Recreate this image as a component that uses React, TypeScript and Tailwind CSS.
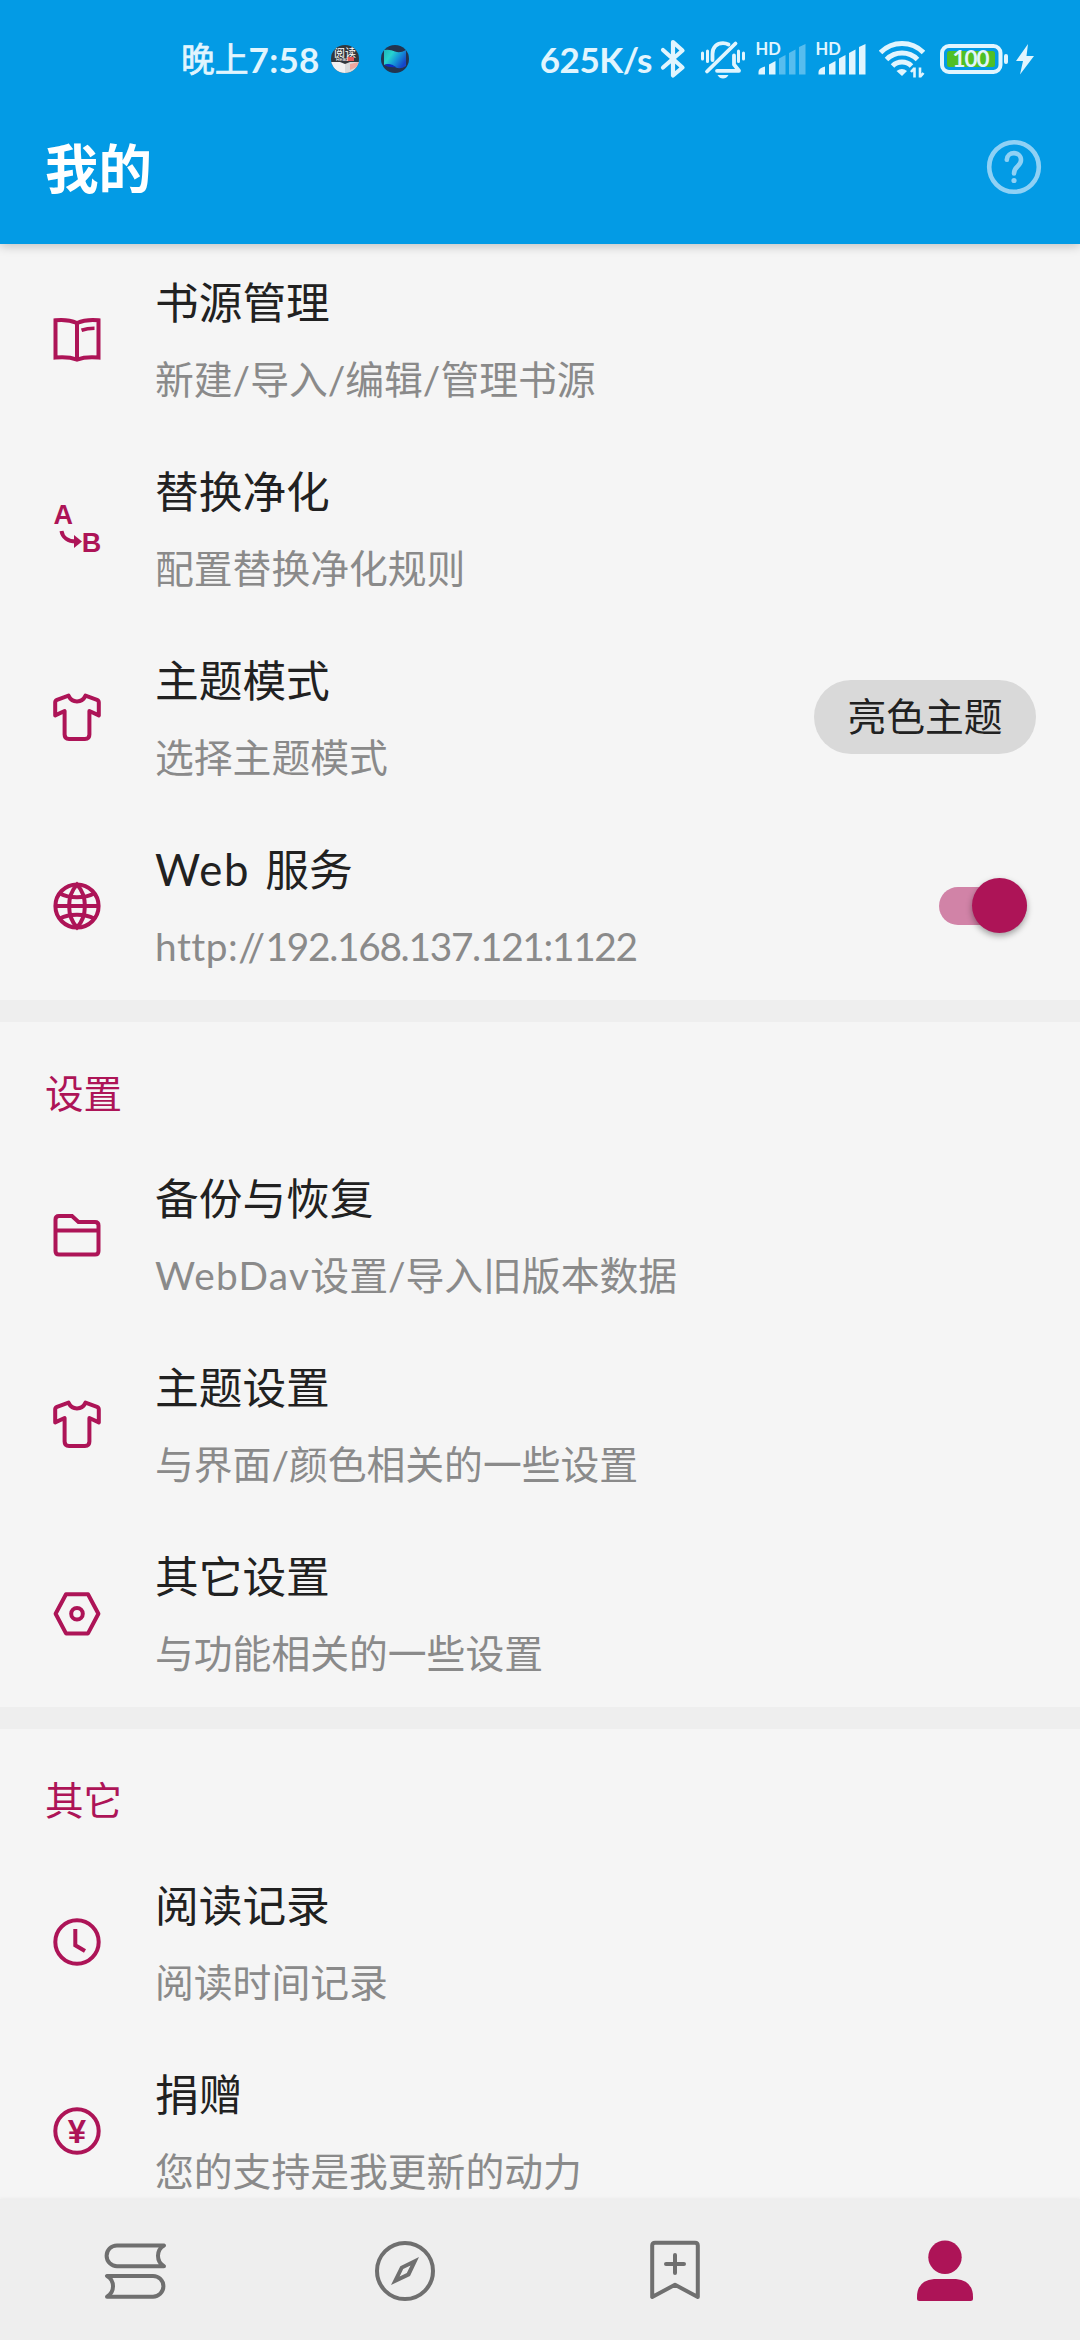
import React from 'react';

const IconBox = ({ children }: { children: React.ReactNode }) => (
  <svg
    width="50"
    height="50"
    viewBox="0 0 50 50"
    fill="none"
    stroke="#ad1457"
    strokeWidth="4"
    className="shrink-0 overflow-visible"
  >
    {children}
  </svg>
);

const BookIcon = () => (
  <IconBox>
    <path d="M3.5 6.3 C12 5.4 19 6.4 25 9 C31 6.4 38 5.4 46.5 6.3 V43.6 C38 42.8 31 43.4 25 45.6 C19 43.4 12 42.8 3.5 43.6 Z M25 9 V45" />
    <path d="M29.5 16.2 C33.5 14.8 38 14.2 42.5 14.2" strokeWidth="3.6" />
  </IconBox>
);

const ReplaceIcon = () => (
  <IconBox>
    <g fill="#ad1457" stroke="none" fontFamily="Liberation Sans, sans-serif" fontWeight="bold" fontSize="27">
      <text x="1.4" y="21.4">A</text>
      <text x="29.8" y="48.8">B</text>
    </g>
    <path d="M9.5 28 C10.5 34.5 16 38.5 24 38.5" strokeWidth="4" />
    <path d="M22 32 L30 38.6 L22 45 Z" fill="#ad1457" stroke="none" />
  </IconBox>
);

const ShirtIcon = () => (
  <IconBox>
    <path
      strokeLinejoin="round"
      d="M16.5 3.6 L5 7.8 Q3.2 8.6 3.2 10.4 V23.4 L12.6 19 V42.5 Q12.6 47 17 47 H33 Q37.4 47 37.4 42.5 V19 L46.8 23.4 V10.4 Q46.8 8.6 45 7.8 L33.5 3.6 C31.5 8 28.5 9.4 25 9.4 C21.5 9.4 18.5 8 16.5 3.6 Z"
    />
  </IconBox>
);

const GlobeIcon = () => (
  <IconBox>
    <circle cx="25" cy="25" r="21.6" />
    <path d="M3 25 H47 M8 12.5 C17 17.6 33 17.6 42 12.5 M8 37.5 C17 32.4 33 32.4 42 37.5" />
    <path d="M25 3.5 C14.5 15 14.5 35 25 46.5 C35.5 35 35.5 15 25 3.5 Z" />
  </IconBox>
);

const FolderIcon = () => (
  <IconBox>
    <path d="M7 6 H20 L26.5 12 H43 Q46.5 12 46.5 15.5 V41 Q46.5 44.5 43 44.5 H7 Q3.5 44.5 3.5 41 V9.5 Q3.5 6 7 6 Z M3.5 20.5 H46.5" />
  </IconBox>
);

const HexIcon = () => (
  <IconBox>
    <path strokeLinejoin="round" d="M3.6 25.8 L14 6.2 H36 L46.4 25.8 L36 45.4 H14 Z" />
    <circle cx="25" cy="25.8" r="5.8" />
  </IconBox>
);

const ClockIcon = () => (
  <IconBox>
    <circle cx="25" cy="25" r="21.7" />
    <path d="M23.3 12 V28.3 L33 34" />
  </IconBox>
);

const YenIcon = () => (
  <IconBox>
    <circle cx="25" cy="25" r="21.7" />
    <text
      x="25"
      y="37"
      textAnchor="middle"
      fill="#ad1457"
      stroke="none"
      fontFamily="Liberation Sans, sans-serif"
      fontWeight="bold"
      fontSize="33"
    >
      ¥
    </text>
  </IconBox>
);

type Item = {
  icon: () => React.ReactElement;
  title: React.ReactNode;
  summary: React.ReactNode;
  extra?: 'pill' | 'switch';
};

const mainItems: Item[] = [
  { icon: BookIcon, title: '书源管理', summary: '新建/导入/编辑/管理书源' },
  { icon: ReplaceIcon, title: '替换净化', summary: '配置替换净化规则' },
  { icon: ShirtIcon, title: '主题模式', summary: '选择主题模式', extra: 'pill' },
  {
    icon: GlobeIcon,
    title: (
      <>
        <span className="tracking-[1.6px]">Web</span> 服务
      </>
    ),
    summary: (
      <>
        <span className="tracking-[0.5px]">http://</span>
        <span className="tracking-[-1.3px]">192.168.137.121:1122</span>
      </>
    ),
    extra: 'switch',
  },
];

const settingItems: Item[] = [
  {
    icon: FolderIcon,
    title: '备份与恢复',
    summary: (
      <>
        <span className="tracking-[1.3px]">WebDav</span>设置/导入旧版本数据
      </>
    ),
  },
  { icon: ShirtIcon, title: '主题设置', summary: '与界面/颜色相关的一些设置' },
  { icon: HexIcon, title: '其它设置', summary: '与功能相关的一些设置' },
];

const otherItems: Item[] = [
  { icon: ClockIcon, title: '阅读记录', summary: '阅读时间记录' },
  { icon: YenIcon, title: '捐赠', summary: '您的支持是我更新的动力' },
];

const Row = ({ icon: Icon, title, summary, extra }: Item) => (
  <div className="flex h-[189px] shrink-0 items-center pl-[52px] pr-11">
    <Icon />
    <div className="ml-[53px] flex-1 whitespace-nowrap">
      <div className="text-[43.7px] leading-[58px] text-[#212121] [word-spacing:4px]">{title}</div>
      <div className="mt-[22px] text-[38.8px] leading-[52px] text-[#8a8a8a]">{summary}</div>
    </div>
    {extra === 'pill' && (
      <button className="flex h-[74px] w-[222px] items-center justify-center rounded-full bg-[#d9d9d9] text-[38.8px] text-[#212121]">
        亮色主题
      </button>
    )}
    {extra === 'switch' && (
      <div className="mr-[9px] flex h-[38px] w-[88px] items-center justify-end rounded-full bg-[#d183a7]">
        <div className="h-[55px] w-[55px] shrink-0 rounded-full bg-[#ad1457] shadow-[0_3px_6px_rgba(0,0,0,0.35)]"></div>
      </div>
    )}
  </div>
);

const Category = ({ name }: { name: string }) => (
  <>
    <div className="h-[22px] shrink-0 bg-[#eeeeee]"></div>
    <div className="flex h-[118px] shrink-0 items-center pl-[45px] pt-[25px] text-[38.6px] text-[#ad1457]">{name}</div>
  </>
);

const Signal = ({ strong }: { strong: boolean }) => (
  <svg width="50" height="40" viewBox="0 0 50 40" fill="#e1f5fe" className="overflow-visible">
    <text x="-0.5" y="16" fontFamily="Lato, sans-serif" fontWeight="bold" fontSize="16.5">HD</text>
    <path d="M2.5 35.5 V33 Q2.5 29 9 27.5 V35.5 Z" />
    <path d="M13 35.5 V25.5 L19.5 22 V35.5 Z" />
    <g opacity={strong ? 1 : 0.38}>
      <path d="M23 35.5 V19.5 L29.5 16 V35.5 Z" />
      <path d="M33 35.5 V14 L39.5 10.5 V35.5 Z" />
      <path d="M43 35.5 V8 L49.5 5 V35.5 Z" />
    </g>
  </svg>
);

const StatusBar = () => (
  <div className="flex h-[118px] items-center pl-[181px] pr-[45px] text-[#e1f5fe]">
    <span className="text-[33.8px] [-webkit-text-stroke:0.7px_#e1f5fe]">晚上</span>
    <span className="text-[35px] font-bold tracking-[0.3px]">7:58</span>

    {/* notification icons */}
    <svg width="80" height="30" viewBox="0 0 80 30" className="ml-[10px]">
      <defs>
        <clipPath id="reader"><circle cx="15" cy="15" r="14" /></clipPath>
        <clipPath id="wave"><circle cx="65" cy="15" r="14" /></clipPath>
        <linearGradient id="teal" x1="0" y1="0" x2="1" y2="0.6">
          <stop offset="0" stopColor="#1fb5b8" />
          <stop offset="0.35" stopColor="#27d3d0" />
          <stop offset="0.65" stopColor="#1596d8" />
          <stop offset="1" stopColor="#1546c8" />
        </linearGradient>
      </defs>
      <g clipPath="url(#reader)">
        <rect width="30" height="30" fill="#33373c" />
        <text x="15" y="12.5" textAnchor="middle" fontSize="11" fill="#fff" fontFamily="Noto Sans CJK SC, sans-serif">阅读</text>
        <rect x="17" y="13" width="7" height="4" fill="#e35656" />
        <text x="6" y="17" fontSize="5" fill="#fff" fontFamily="Liberation Sans, sans-serif">Read</text>
        <path d="M0 18 H10 L15 20 V30 H0 Z" fill="#f1f1f1" />
        <path d="M30 18 H20 L15 20 V30 H30 Z" fill="#d9dadb" />
        <path d="M20 20 L29 18 V22 L20 26 Z" fill="#f0a8a0" />
      </g>
      <g clipPath="url(#wave)">
        <rect x="50" width="30" height="30" fill="#23344f" />
        <path d="M54 6 Q60 5 65 7.5 Q70 9.5 76 6 V22 Q70 26 65 23 Q60 19 54 21 Z" fill="url(#teal)" />
        <path d="M54 21 Q60 18 66 23 Q59 24 54 21 Z" fill="#0c30c0" />
      </g>
    </svg>

    <span className="ml-auto text-[35px] font-bold leading-none tracking-[-0.5px]">625K/s</span>

    <svg width="26" height="40" viewBox="0 0 26 40" fill="none" stroke="#e1f5fe" strokeWidth="4.2" strokeLinejoin="round" strokeLinecap="round" className="ml-2">
      <path d="M3 11 L22.5 28.5 L13 36.5 V3 L22.5 11.5 L3 28.5" />
    </svg>

    <svg width="46" height="40" viewBox="0 0 46 40" fill="none" stroke="#e1f5fe" strokeWidth="3.8" strokeLinecap="round" className="ml-[14px]">
      <path d="M7 32.5 L35.5 4.5" />
      <path d="M12.5 21 V15 C12.5 8 17 4.2 23 4.2 C25 4.2 27 4.7 28.5 5.5" />
      <path d="M17 31.8 H39 L34 25.5 V16.5" strokeLinejoin="round" />
      <path d="M17.5 36 H28.5 Q26.5 39.5 23 39.5 Q19.5 39.5 17.5 36 Z" fill="#e1f5fe" stroke="none" />
      <path d="M2.5 14 V20 M7.5 12 V22.5 M38.5 12 V22.5 M43.5 14 V20" strokeWidth="3" />
    </svg>

    <div className="ml-[10px] flex gap-[10px]">
      <Signal strong={false} />
      <Signal strong={true} />
    </div>

    <svg width="46" height="40" viewBox="0 0 46 40" fill="none" stroke="#e1f5fe" className="ml-[13px]">
      <path d="M1.5 13.5 A30 30 0 0 1 44.5 13.5" strokeWidth="5" />
      <path d="M7.5 20.5 A22 22 0 0 1 38.5 20.5" strokeWidth="5" />
      <path d="M13.5 27 A13.5 13.5 0 0 1 32.5 27" strokeWidth="5" />
      <path d="M17.5 32 Q23 28 28 32 L23 37 Z" fill="#e1f5fe" stroke="none" />
      <path d="M35.5 28.5 V38.5 M41 28.5 V38.5 M35.5 29 L32 33 M41 38 L44.5 34" strokeWidth="2.6" />
    </svg>

    <svg width="68" height="40" viewBox="0 0 68 40" className="ml-[15px]">
      <rect x="2" y="7" width="58.5" height="26" rx="7" fill="none" stroke="#e1f5fe" strokeWidth="4" />
      <rect x="7" y="12" width="48" height="16" rx="2.5" fill="#4fbf26" />
      <rect x="64" y="15" width="4" height="10" rx="2" fill="#e1f5fe" />
      <text x="31" y="28.3" textAnchor="middle" fontSize="22.5" fill="#e1f5fe" fontFamily="Lato, sans-serif" fontWeight="bold" textLength="37">100</text>
    </svg>

    <svg width="20" height="40" viewBox="0 0 20 40" fill="#e1f5fe" className="ml-[7px]">
      <path d="M13 5 L1 22 H8 L5 35.5 L19 17 H11.5 Z" />
    </svg>
  </div>
);

const BottomNav = () => (
  <nav className="flex h-[141px] shrink-0 items-center bg-[#eeeeee] pt-[3px] shadow-[0_-1px_3px_rgba(0,0,0,0.04)]">
    <div className="flex flex-1 justify-center">
      <svg width="64" height="64" viewBox="0 0 64 64" fill="none" stroke="#6f6f6f" strokeWidth="4">
        <path strokeLinejoin="round" d="M61 6.4 H14 A10.4 10.4 0 0 0 14 27.2 H61 A12 12 0 0 1 61 6.4 Z" />
        <path strokeLinejoin="round" d="M4 36.9 H50 A10.4 10.4 0 0 1 50 57.7 H4 A12 12 0 0 0 4 36.9 Z" />
      </svg>
    </div>
    <div className="flex flex-1 justify-center">
      <svg width="64" height="64" viewBox="0 0 64 64" fill="none" stroke="#6f6f6f" strokeWidth="4">
        <circle cx="32" cy="32" r="28" />
        <path
          fill="#6f6f6f"
          stroke="none"
          fillRule="evenodd"
          d="M46 18 L37 37 L18 46 L27.3 27.3 Z M37.5 26.6 L30.2 30 L26.6 37.4 L33.8 34 Z"
        />
      </svg>
    </div>
    <div className="flex flex-1 justify-center">
      <svg width="64" height="64" viewBox="0 0 64 64" fill="none" stroke="#6f6f6f" strokeWidth="4">
        <path strokeLinejoin="round" d="M12 3.8 H52 Q54.8 3.8 54.8 6.6 V58 L32 45.8 L9.2 58 V6.6 Q9.2 3.8 12 3.8 Z" />
        <path strokeLinecap="round" d="M32 16 V34 M23 25 H41" />
      </svg>
    </div>
    <div className="flex flex-1 justify-center">
      <svg width="64" height="64" viewBox="0 0 64 64" fill="#ad1457">
        <circle cx="32" cy="18.2" r="16.7" />
        <path d="M21 40 H43 Q60 41.5 60 58 V59.5 Q60 62 57.5 62 H6.5 Q4 62 4 59.5 V58 Q4 41.5 21 40 Z" />
      </svg>
    </div>
  </nav>
);

export default function App() {
  return (
    <div className="flex h-[2340px] w-[1080px] flex-col overflow-hidden bg-[#f5f5f5] font-[Lato,'Noto_Sans_CJK_SC',sans-serif]">
      <header className="relative z-10 h-[244px] shrink-0 bg-[#039be5] shadow-[0_2px_10px_rgba(0,0,0,0.22)]">
        <StatusBar />
        <div className="flex h-[98px] items-center justify-between pl-[45px] pr-[38px]">
          <h1 className="pt-[2px] text-[53.5px] font-bold text-white">我的</h1>
          <svg width="56" height="56" viewBox="0 0 56 56" fill="none" stroke="#8fd1f5" strokeWidth="4.6">
            <circle cx="28" cy="28" r="24.8" />
            <path strokeLinecap="round" d="M20.8 20.8 C21.2 11.8 35 12 35 21 C35 27.5 28 27 28 34.4" />
            <circle cx="28" cy="41.5" r="2.6" fill="#8fd1f5" stroke="none" />
          </svg>
        </div>
      </header>

      <main className="flex min-h-0 flex-1 flex-col overflow-hidden">
        {mainItems.map((item, i) => (
          <Row key={i} {...item} />
        ))}
        <Category name="设置" />
        {settingItems.map((item, i) => (
          <Row key={i} {...item} />
        ))}
        <Category name="其它" />
        {otherItems.map((item, i) => (
          <Row key={i} {...item} />
        ))}
      </main>

      <BottomNav />
    </div>
  );
}
